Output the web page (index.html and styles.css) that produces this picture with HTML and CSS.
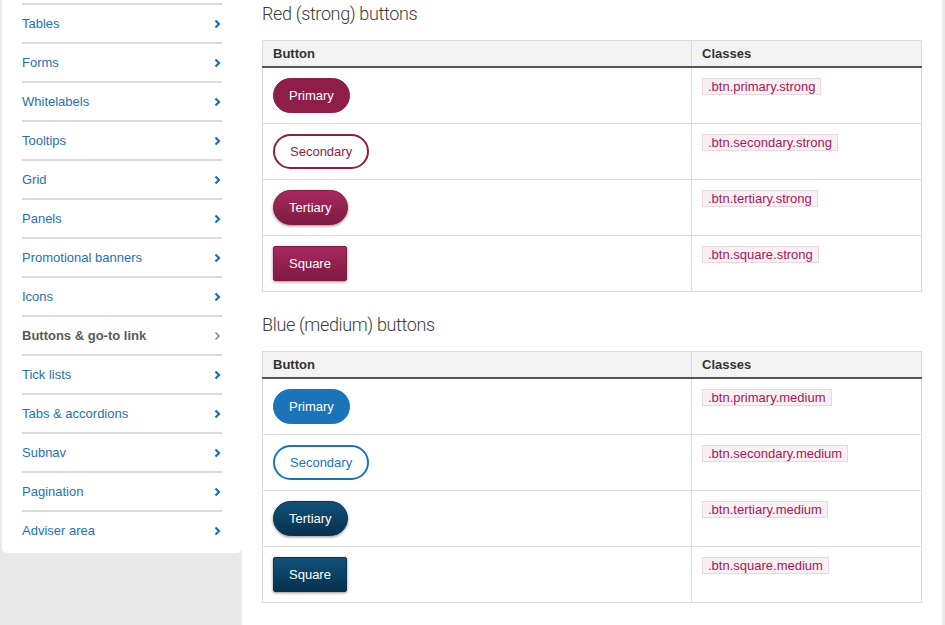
FILE: index.html
```html
<!DOCTYPE html>
<html>
<head>
<meta charset="utf-8">
<link rel="stylesheet" href="styles.css">
</head>
<body>
<div class="page">
  <nav class="sidebar">
    <ul class="nav">
      <li class="nav-item"><a>Tables</a><svg class="chev" viewBox="0 0 7 10"><polyline points="1.5,1.5 5,5 1.5,8.5"/></svg></li>
      <li class="nav-item"><a>Forms</a><svg class="chev" viewBox="0 0 7 10"><polyline points="1.5,1.5 5,5 1.5,8.5"/></svg></li>
      <li class="nav-item"><a>Whitelabels</a><svg class="chev" viewBox="0 0 7 10"><polyline points="1.5,1.5 5,5 1.5,8.5"/></svg></li>
      <li class="nav-item"><a>Tooltips</a><svg class="chev" viewBox="0 0 7 10"><polyline points="1.5,1.5 5,5 1.5,8.5"/></svg></li>
      <li class="nav-item"><a>Grid</a><svg class="chev" viewBox="0 0 7 10"><polyline points="1.5,1.5 5,5 1.5,8.5"/></svg></li>
      <li class="nav-item"><a>Panels</a><svg class="chev" viewBox="0 0 7 10"><polyline points="1.5,1.5 5,5 1.5,8.5"/></svg></li>
      <li class="nav-item"><a>Promotional banners</a><svg class="chev" viewBox="0 0 7 10"><polyline points="1.5,1.5 5,5 1.5,8.5"/></svg></li>
      <li class="nav-item"><a>Icons</a><svg class="chev" viewBox="0 0 7 10"><polyline points="1.5,1.5 5,5 1.5,8.5"/></svg></li>
      <li class="nav-item active"><a>Buttons &amp; go-to link</a><svg class="chev" viewBox="0 0 7 10"><polyline points="1.5,1.5 5,5 1.5,8.5"/></svg></li>
      <li class="nav-item"><a>Tick lists</a><svg class="chev" viewBox="0 0 7 10"><polyline points="1.5,1.5 5,5 1.5,8.5"/></svg></li>
      <li class="nav-item"><a>Tabs &amp; accordions</a><svg class="chev" viewBox="0 0 7 10"><polyline points="1.5,1.5 5,5 1.5,8.5"/></svg></li>
      <li class="nav-item"><a>Subnav</a><svg class="chev" viewBox="0 0 7 10"><polyline points="1.5,1.5 5,5 1.5,8.5"/></svg></li>
      <li class="nav-item"><a>Pagination</a><svg class="chev" viewBox="0 0 7 10"><polyline points="1.5,1.5 5,5 1.5,8.5"/></svg></li>
      <li class="nav-item"><a>Adviser area</a><svg class="chev" viewBox="0 0 7 10"><polyline points="1.5,1.5 5,5 1.5,8.5"/></svg></li>
    </ul>
  </nav>
  <main class="main">
    <h2 class="title">Red (strong) buttons</h2>
    <table class="demo">
      <thead>
        <tr><th class="col-btn">Button</th><th>Classes</th></tr>
      </thead>
      <tbody>
        <tr><td><span class="btn primary strong">Primary</span></td><td><code>.btn.primary.strong</code></td></tr>
        <tr><td><span class="btn secondary strong">Secondary</span></td><td><code>.btn.secondary.strong</code></td></tr>
        <tr><td><span class="btn tertiary strong">Tertiary</span></td><td><code>.btn.tertiary.strong</code></td></tr>
        <tr><td><span class="btn square strong">Square</span></td><td><code>.btn.square.strong</code></td></tr>
      </tbody>
    </table>
    <h2 class="title">Blue (medium) buttons</h2>
    <table class="demo">
      <thead>
        <tr><th class="col-btn">Button</th><th>Classes</th></tr>
      </thead>
      <tbody>
        <tr><td><span class="btn primary medium">Primary</span></td><td><code>.btn.primary.medium</code></td></tr>
        <tr><td><span class="btn secondary medium">Secondary</span></td><td><code>.btn.secondary.medium</code></td></tr>
        <tr><td><span class="btn tertiary medium">Tertiary</span></td><td><code>.btn.tertiary.medium</code></td></tr>
        <tr><td><span class="btn square medium">Square</span></td><td><code>.btn.square.medium</code></td></tr>
      </tbody>
    </table>
  </main>
</div>
</body>
</html>
```

FILE: styles.css
```css
html, body {
  margin: 0;
  padding: 0;
  height: 100%;
}
body {
  background: #e8e9e8;
  font-family: "Liberation Sans", Arial, sans-serif;
  font-size: 13px;
  overflow: hidden;
}
.page {
  display: flex;
  align-items: flex-start;
  min-height: 100%;
}
.sidebar {
  width: 240px;
  margin-left: 2px;
  box-sizing: border-box;
  background: #fff;
  padding: 3px 20px 4px;
  border-radius: 0 0 5px 5px;
}
.nav {
  list-style: none;
  margin: 0;
  padding: 0;
}
.nav-item {
  display: flex;
  align-items: center;
  justify-content: space-between;
  height: 37px;
  border-top: 2px solid #dcdcdc;
  color: #1f71b4;
}
.nav-item a {
  color: inherit;
}
.nav-item.active {
  color: #5a5a5a;
  font-weight: bold;
}
.chev {
  width: 7px;
  height: 10px;
  margin-right: 1px;
  fill: none;
  stroke: #1f6fb2;
  stroke-width: 2.2;
}
.nav-item.active .chev {
  stroke: #8a8a8a;
  stroke-width: 1.6;
}
.main {
  flex: none;
  width: 700px;
  align-self: stretch;
  background: #fff;
  padding: 2px 20px 0;
  box-sizing: border-box;
  min-height: 625px;
}
.title {
  margin: 0 0 14px;
  font-family: Roboto, "Liberation Sans", sans-serif;
  font-weight: 300;
  font-size: 18px;
  letter-spacing: -0.35px;
  line-height: 24px;
  color: #3c3c3c;
}
.demo {
  width: 660px;
  border-collapse: collapse;
  margin-bottom: 21px;
}
.demo th {
  background: #f3f3f3;
  text-align: left;
  font-weight: bold;
  color: #333;
  height: 25px;
  padding: 0 10px;
  border: 1px solid #dadada;
  border-bottom: 2px solid #555;
}
.demo .col-btn {
  width: 408px;
}
.demo td {
  vertical-align: top;
  padding: 10px 10px 10px;
  border: 1px solid #dadada;
  height: 35px;
}
.btn {
  display: inline-block;
  height: 35px;
  line-height: 33px;
  padding: 0 15px;
  border: 1px solid transparent;
  border-radius: 18px;
  color: #fff;
  box-sizing: border-box;
  white-space: nowrap;
}
.btn.secondary {
  border-width: 2px;
  line-height: 31px;
  background: #fff;
}
.btn.primary.strong {
  background: #8e1d47;
  border-color: #8e1d47;
}
.btn.secondary.strong {
  border-color: #8e1d47;
  color: #8e1d47;
}
.btn.tertiary.strong {
  background: linear-gradient(#a8295f, #7d1a41);
  border-color: #7f1b42;
  box-shadow: 0 1px 3px rgba(0, 0, 0, 0.45);
}
.btn.square.strong {
  background: linear-gradient(#a8295f, #7d1a41);
  border-color: #7f1b42;
  border-radius: 2px;
  box-shadow: 0 1px 3px rgba(0, 0, 0, 0.45);
}
.btn.primary.medium {
  background: #1b74ba;
  border-color: #1b74ba;
}
.btn.secondary.medium {
  border-color: #1b74ba;
  color: #1b74ba;
}
.btn.tertiary.medium {
  background: linear-gradient(#11517a, #07314d);
  border-color: #08344f;
  box-shadow: 0 1px 3px rgba(0, 0, 0, 0.45);
}
.btn.square.medium {
  background: linear-gradient(#11517a, #07314d);
  border-color: #08344f;
  border-radius: 2px;
  box-shadow: 0 1px 3px rgba(0, 0, 0, 0.45);
}
code {
  display: inline-block;
  font-family: "Liberation Sans", Arial, sans-serif;
  font-size: 13px;
  line-height: 15px;
  padding: 0 5px;
  background: #f8f0f2;
  border: 1px solid #efd5dd;
  color: #a3195b;
}
```
